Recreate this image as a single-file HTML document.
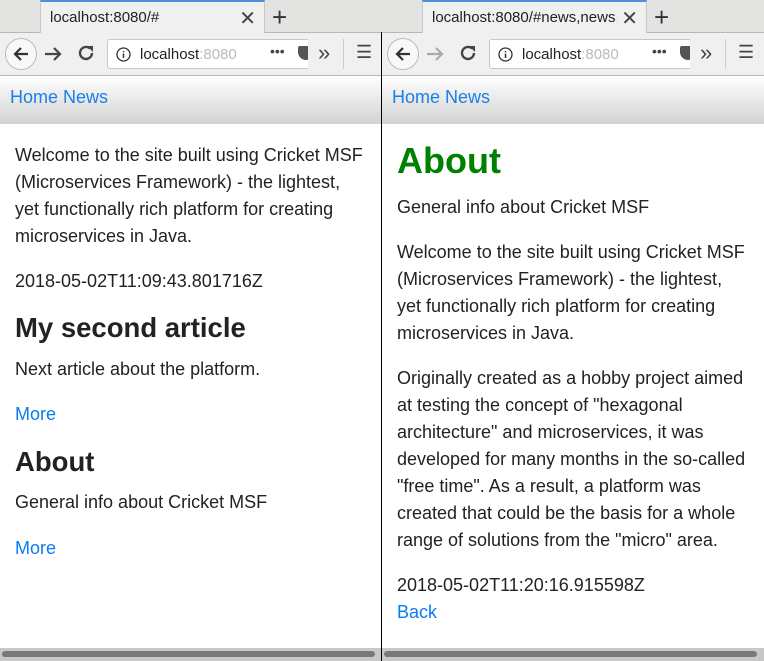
<!DOCTYPE html>
<html><head><meta charset="utf-8"><style>
*{margin:0;padding:0;box-sizing:border-box}
body{width:764px;height:661px;overflow:hidden;background:#fff;font-family:"Liberation Sans",sans-serif;position:relative}
.pane{position:absolute;top:0;width:382px;height:661px;overflow:hidden;background:#fff}
.tabs{position:absolute;left:0;top:0;width:382px;height:33px;background:#e3e3e2;border-bottom:1px solid #b8b8b8}
.tab{position:absolute;left:40px;top:0;width:225px;height:33px;background:#f0f0f0;border-top:2px solid #4a90d9;border-left:1px solid #c8c8c8;border-right:1px solid #c8c8c8;font-size:15px;color:#222;padding:7px 0 0 9px;white-space:nowrap;overflow:hidden}
.tab .x{position:absolute;right:8px;top:4px;font-size:20px;color:#444;background:#f0f0f0;padding-left:4px}
.plus{position:absolute;left:272px;top:2px;font-size:26px;color:#333}
.tb{position:absolute;left:0;top:33px;width:382px;height:43px;background:#f0f0f0;border-bottom:1px solid #b8b8b8}
.back{position:absolute;left:5px;top:5px;width:32px;height:32px;border:1px solid #bbb;border-radius:50%;background:#f8f8f8}
.url{position:absolute;left:107px;top:6px;width:201px;height:30px;background:#fff;border:1px solid #c8c8c8;border-right:none;border-radius:3px 0 0 3px;font-size:15px;padding:6px 0 0 32px;color:#222;white-space:nowrap;overflow:hidden}
.url .g{color:#bbb}
.ic{position:absolute;font-size:17px;color:#444}
.nav{position:absolute;left:0;top:76px;width:382px;height:48px;background:linear-gradient(#fff,#d2d2d2);font-size:18px;color:#1a7fe8;padding:11px 0 0 10px}
.t{position:absolute;left:15px;font-size:18px;color:#222;line-height:27px;white-space:nowrap}
.a{color:#0a7cf0}
.h2{font-size:27.5px;font-weight:bold;color:#222}
.sb{position:absolute;left:0;top:648px;width:382px;height:13px;background:#c8c8c8}
.sb div{position:absolute;left:2px;top:3px;right:7px;height:6px;background:#777a7a;border-radius:3px}
</style></head><body>

<div class="pane" style="left:0">
<div class="tabs"><div class="tab">localhost:8080/#<span class="x">✕</span></div><div class="plus">+</div></div>
<div class="tb">
<div class="back"><svg width="30" height="30" viewBox="0 0 30 30"><path d="M22 15H9M15 9l-6 6 6 6" stroke="#333" stroke-width="2.2" fill="none"/></svg></div>
<svg style="position:absolute;left:42px;top:10px" width="22" height="22" viewBox="0 0 22 22"><path d="M3 11h15M12 5l6 6-6 6" stroke="#444" stroke-width="2.2" fill="none"/></svg>
<svg style="position:absolute;left:76px;top:10px" width="20" height="20" viewBox="0 0 20 20"><path d="M16 10a6 6 0 1 1-2-4.5" stroke="#444" stroke-width="2.4" fill="none"/><path d="M11 3h6v6z" fill="#444"/></svg>
<div class="url"><svg style="position:absolute;left:8px;top:7px" width="15" height="15" viewBox="0 0 15 15"><circle cx="7.5" cy="7.5" r="6.5" stroke="#333" stroke-width="1.3" fill="none"/><path d="M7.5 6.5v4.5M7.5 4v1.2" stroke="#333" stroke-width="1.5"/></svg>localhost<span class="g">:8080</span><span style="position:absolute;left:162px;top:3px;font-size:14px;color:#444">•••</span><span style="position:absolute;left:190px;top:6px;width:16px;height:14px;background:#555;border-radius:2px 2px 8px 8px"></span></div>
<div class="ic" style="left:318px;top:7px;font-size:22px">»</div>
<div style="position:absolute;left:343px;top:6px;width:1px;height:30px;background:#ccc"></div>
<div class="ic" style="left:356px;top:9px;font-size:18px">☰</div>
</div>
<div class="nav">Home News</div>
<div class="t" style="top:142px">Welcome to the site built using Cricket MSF<br>(Microservices Framework) - the lightest,<br>yet functionally rich platform for creating<br>microservices in Java.</div>
<div class="t" style="top:268px">2018-05-02T11:09:43.801716Z</div>
<div class="t h2" style="top:314px">My second article</div>
<div class="t" style="top:356px">Next article about the platform.</div>
<div class="t a" style="top:401px">More</div>
<div class="t h2" style="top:448px">About</div>
<div class="t" style="top:489px">General info about Cricket MSF</div>
<div class="t a" style="top:535px">More</div>
<div class="sb"><div></div></div>
</div>

<div style="position:absolute;left:381px;top:32px;width:1px;height:629px;background:#000;z-index:5"></div>

<div class="pane" style="left:382px">
<div class="tabs"><div class="tab">localhost:8080/#news,news,<span style="color:#aaa">a</span><span class="x">✕</span></div><div class="plus">+</div></div>
<div class="tb">
<div class="back"><svg width="30" height="30" viewBox="0 0 30 30"><path d="M22 15H9M15 9l-6 6 6 6" stroke="#333" stroke-width="2.2" fill="none"/></svg></div>
<svg style="position:absolute;left:42px;top:10px" width="22" height="22" viewBox="0 0 22 22"><path d="M3 11h15M12 5l6 6-6 6" stroke="#aaa" stroke-width="2.2" fill="none"/></svg>
<svg style="position:absolute;left:76px;top:10px" width="20" height="20" viewBox="0 0 20 20"><path d="M16 10a6 6 0 1 1-2-4.5" stroke="#444" stroke-width="2.4" fill="none"/><path d="M11 3h6v6z" fill="#444"/></svg>
<div class="url"><svg style="position:absolute;left:8px;top:7px" width="15" height="15" viewBox="0 0 15 15"><circle cx="7.5" cy="7.5" r="6.5" stroke="#333" stroke-width="1.3" fill="none"/><path d="M7.5 6.5v4.5M7.5 4v1.2" stroke="#333" stroke-width="1.5"/></svg>localhost<span class="g">:8080</span><span style="position:absolute;left:162px;top:3px;font-size:14px;color:#444">•••</span><span style="position:absolute;left:190px;top:6px;width:16px;height:14px;background:#555;border-radius:2px 2px 8px 8px"></span></div>
<div class="ic" style="left:318px;top:7px;font-size:22px">»</div>
<div style="position:absolute;left:343px;top:6px;width:1px;height:30px;background:#ccc"></div>
<div class="ic" style="left:356px;top:9px;font-size:18px">☰</div>
</div>
<div class="nav">Home News</div>
<div class="t" style="top:140px;font-size:36px;font-weight:bold;color:#008000;line-height:42px">About</div>
<div class="t" style="top:194px">General info about Cricket MSF</div>
<div class="t" style="top:239px">Welcome to the site built using Cricket MSF<br>(Microservices Framework) - the lightest,<br>yet functionally rich platform for creating<br>microservices in Java.</div>
<div class="t" style="top:365px">Originally created as a hobby project aimed<br>at testing the concept of "hexagonal<br>architecture" and microservices, it was<br>developed for many months in the so-called<br>"free time". As a result, a platform was<br>created that could be the basis for a whole<br>range of solutions from the "micro" area.</div>
<div class="t" style="top:572px">2018-05-02T11:20:16.915598Z</div>
<div class="t a" style="top:599px">Back</div>
<div class="sb"><div></div></div>
</div>
</body></html>
